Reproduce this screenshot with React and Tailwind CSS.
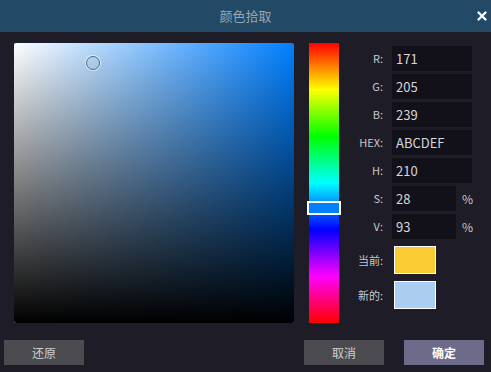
import { X } from 'lucide-react'

const fields = [
  { label: 'R:', value: '171' },
  { label: 'G:', value: '205' },
  { label: 'B:', value: '239' },
  { label: 'HEX:', value: 'ABCDEF' },
  { label: 'H:', value: '210' },
  { label: 'S:', value: '28', pct: true },
  { label: 'V:', value: '93', pct: true },
]

function Field({ label, value, pct }) {
  return (
    <div className="flex items-center h-[25px]">
      <span className="w-[34px] text-right text-[11px] text-[#c9c9cf]">{label}</span>
      <div className={`ml-[9px] h-[25px] bg-[#12111a] flex items-center pl-[4px] text-[13px] text-[#d6d6dc] ${pct ? 'w-[64px]' : 'w-[80px]'}`}>
        {value}
      </div>
      {pct && <span className="ml-[6px] text-[12px] text-[#c9c9cf]">%</span>}
    </div>
  )
}

export default function App() {
  return (
    <div className="w-[491px] h-[372px] bg-[#1d1c27] flex flex-col" style={{ fontFamily: '"Noto Sans CJK SC", "Noto Sans", sans-serif' }}>
      <div className="h-[32px] bg-[#224a66] relative flex items-center justify-center">
        <span className="text-[13px] text-[#9aa6b2]">颜色拾取</span>
        <X size={14} strokeWidth={4} className="absolute right-[2px] top-[9px] text-white" />
      </div>

      <div className="flex pl-[14px] pt-[11px]">
        <div className="relative w-[280px] h-[280px] rounded-[2px] overflow-hidden bg-[#007fff]">
          <div className="absolute inset-0 bg-gradient-to-r from-white to-transparent" />
          <div className="absolute inset-0 bg-gradient-to-b from-transparent to-black" />
          <div className="absolute left-[72px] top-[13px] w-[14px] h-[14px] rounded-full border-[1.5px] border-[#5a6a7a] shadow-[0_0_0_1px_rgba(255,255,255,0.6)]" />
        </div>

        <div className="relative ml-[15px] w-[30px] h-[280px]"
          style={{ background: 'linear-gradient(to bottom, #ff0000 0%, #ffff00 16.66%, #00ff00 33.33%, #00ffff 50%, #0000ff 66.66%, #ff00ff 83.33%, #ff0000 100%)' }}>
          <div className="absolute left-[-2px] top-[158px] w-[34px] h-[14px] border-2 border-white bg-[#007fff]" />
        </div>

        <div className="ml-[10px] pt-[3px] flex flex-col gap-[3px]">
          {fields.map(f => <Field key={f.label} {...f} />)}
          <div className="flex items-center mt-[4px]">
            <span className="w-[34px] text-right text-[11px] text-[#c9c9cf]">当前:</span>
            <div className="ml-[11px] w-[42px] h-[28px] border border-white bg-[#fbcb33]" />
          </div>
          <div className="flex items-center mt-[4px]">
            <span className="w-[34px] text-right text-[11px] text-[#c9c9cf]">新的:</span>
            <div className="ml-[11px] w-[42px] h-[28px] border border-white bg-[#abcdef]" />
          </div>
        </div>
      </div>

      <div className="flex items-center mt-[17px] pl-[4px] pr-[7px]">
        <button className="w-[80px] h-[25px] bg-[#4b4b4f] text-[12px] text-[#d0d0d0]">还原</button>
        <div className="flex-1" />
        <button className="w-[80px] h-[25px] bg-[#4b4b4f] text-[12px] text-[#d0d0d0]">取消</button>
        <button className="ml-[20px] w-[80px] h-[25px] bg-[#6c6b8a] text-[12px] font-bold text-white">确定</button>
      </div>
    </div>
  )
}
